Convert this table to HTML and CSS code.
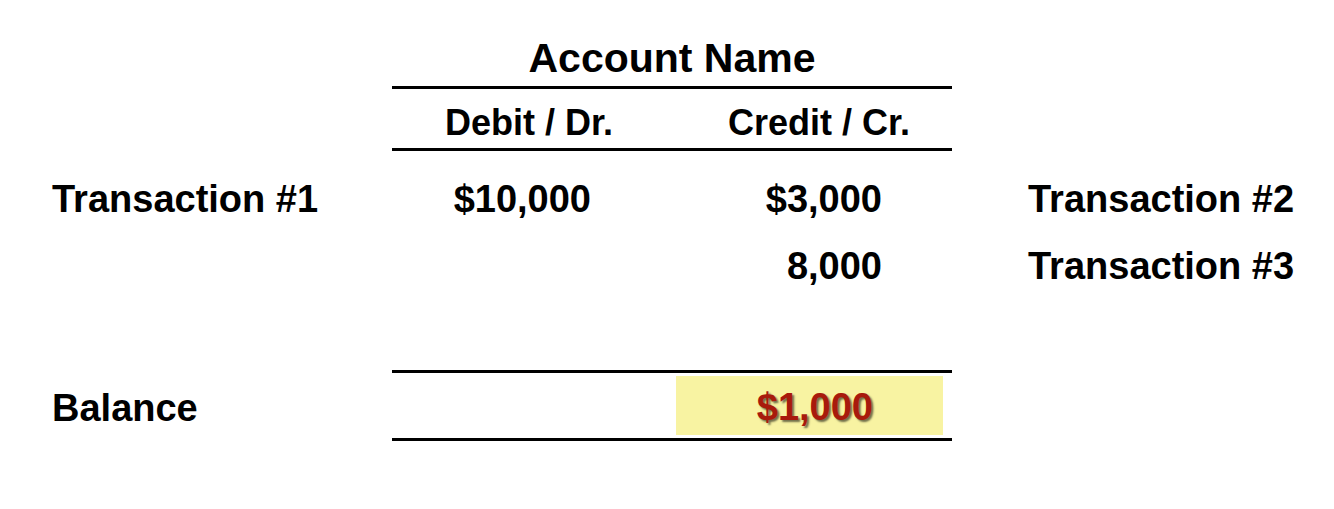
FILE: index.html
```html
<!DOCTYPE html>
<html>
<head>
<meta charset="utf-8">
<link rel="stylesheet" href="styles.css">
</head>
<body>
<div class="sheet">
  <div class="title">Account Name</div>
  <div class="head head-debit">Debit / Dr.</div>
  <div class="head head-credit">Credit / Cr.</div>

  <div class="label row1">Transaction #1</div>
  <div class="val debit row1">$10,000</div>
  <div class="val credit row1">$3,000</div>
  <div class="gapcell row1"></div>
  <div class="label right row1">Transaction #2</div>

  <div class="label row2"></div>
  <div class="val debit row2"></div>
  <div class="val credit row2">8,000</div>
  <div class="gapcell row2"></div>
  <div class="label right row2">Transaction #3</div>

  <div class="label bal">Balance</div>
  <div class="bal-cell bal-debit"></div>
  <div class="bal-cell bal-credit"><div class="box">$1,000</div></div>
</div>
</body>
</html>
```

FILE: styles.css
```css
html, body {
  margin: 0;
  padding: 0;
  background: #ffffff;
}

.sheet {
  display: grid;
  grid-template-columns: 340px 284px 276px 76px 300px;
  padding-left: 52px;
  font-family: "Liberation Sans", Arial, sans-serif;
  font-weight: bold;
  color: #000;
}

.title {
  grid-column: 2 / 4;
  grid-row: 1;
  text-align: center;
  font-size: 41px;
  line-height: 40px;
  padding-top: 38px;
  padding-bottom: 8px;
  border-bottom: 3px solid #000;
}

.head {
  grid-row: 2;
  font-size: 36px;
  line-height: 36px;
  padding-top: 16px;
  padding-bottom: 7px;
  border-bottom: 3px solid #000;
  text-align: center;
}

.head-debit {
  grid-column: 2;
  padding-right: 10px;
}

.head-credit {
  grid-column: 3;
  padding-left: 10px;
}

.row1, .row2 {
  font-size: 38px;
  line-height: 67px;
  height: 67px;
}

.row1 {
  grid-row: 3;
  margin-top: 15px;
}

.row2 {
  grid-row: 4;
}

.label {
  grid-column: 1;
}

.label.right {
  grid-column: 5;
}

.gapcell {
  grid-column: 4;
}

.val {
  text-align: right;
}

.val.debit {
  grid-column: 2;
  padding-right: 85px;
}

.val.credit {
  grid-column: 3;
  padding-right: 70px;
}

.bal, .bal-cell {
  grid-row: 5;
  margin-top: 70px;
  font-size: 38px;
}

.bal {
  line-height: 64px;
  padding-top: 6px;
}

.bal-cell {
  border-top: 3px solid #000;
  border-bottom: 3px solid #000;
  height: 65px;
}

.bal-debit {
  grid-column: 2;
}

.bal-credit {
  grid-column: 3;
  display: flex;
}

.box {
  flex: 1;
  margin: 3px 9px 3px 0;
  background: #f8f3a2;
  color: #a81a0c;
  text-align: right;
  padding-right: 70px;
  padding-top: 3px;
  line-height: 56px;
  text-shadow: 2px 2px 2px rgba(0, 0, 0, 0.55);
}
```
